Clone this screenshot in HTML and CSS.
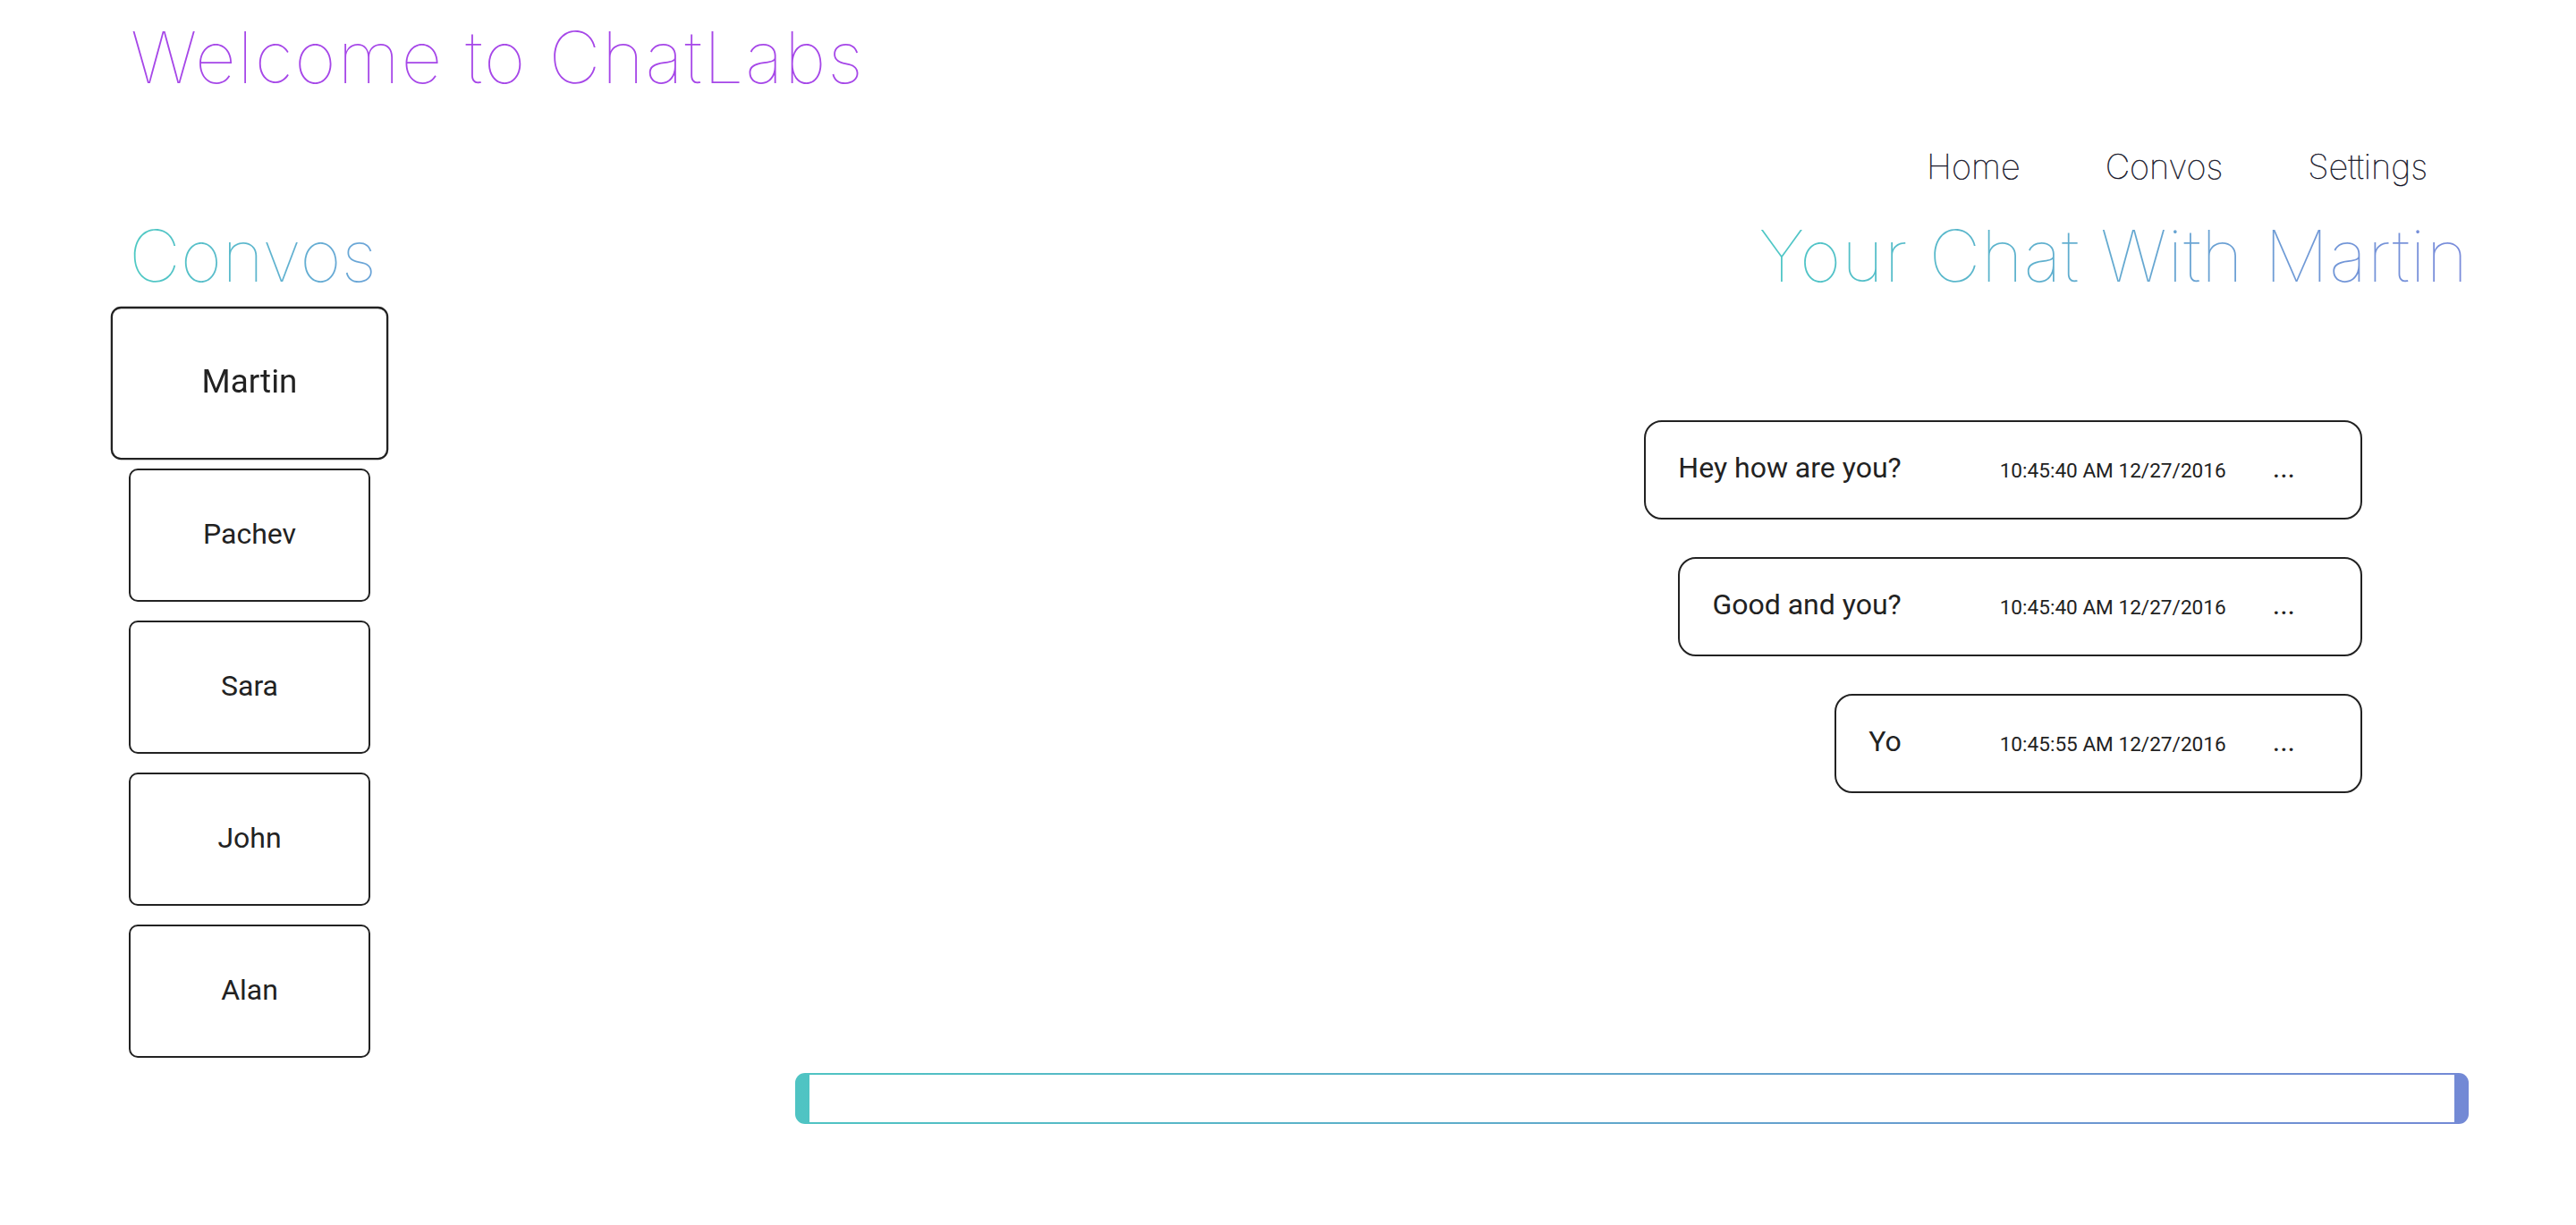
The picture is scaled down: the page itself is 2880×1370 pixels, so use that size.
FILE: index.html
```html
<!DOCTYPE html>
<html lang="en">
<head>
<meta charset="utf-8">
<title>ChatLabs</title>
<link rel="stylesheet" href="styles.css">
</head>
<body>
<header class="top">
  <h1 class="brand">Welcome to ChatLabs</h1>
  <nav class="nav">
    <a class="nav-link" href="#">Home</a>
    <a class="nav-link" href="#">Convos</a>
    <a class="nav-link" href="#">Settings</a>
  </nav>
</header>
<main class="layout">
  <aside class="sidebar">
    <h2 class="section-title"><span class="grad grad-short">Convos</span></h2>
    <ul class="convo-list">
      <li class="convo active">Martin</li>
      <li class="convo">Pachev</li>
      <li class="convo">Sara</li>
      <li class="convo">John</li>
      <li class="convo">Alan</li>
    </ul>
  </aside>
  <section class="chat">
    <h2 class="chat-title"><span class="grad">Your Chat With Martin</span></h2>
    <div class="messages">
      <div class="bubble">
        <span class="msg-text">Hey how are you?</span>
        <span class="msg-time">10:45:40 AM 12/27/2016</span>
        <span class="msg-more">...</span>
      </div>
      <div class="bubble">
        <span class="msg-text">Good and you?</span>
        <span class="msg-time">10:45:40 AM 12/27/2016</span>
        <span class="msg-more">...</span>
      </div>
      <div class="bubble">
        <span class="msg-text">Yo</span>
        <span class="msg-time">10:45:55 AM 12/27/2016</span>
        <span class="msg-more">...</span>
      </div>
    </div>
    <div class="composer">
      <input class="composer-input" type="text" aria-label="Message">
    </div>
  </section>
</main>
</body>
</html>
```
FILE: styles.css
```css
* { box-sizing: border-box; }

body {
  margin: 0;
  background: #ffffff;
  font-family: Roboto, "Liberation Sans", sans-serif;
  color: #222222;
}

.top {
  padding-top: 24px;
}

.brand {
  margin: 0;
  padding-left: 146px;
  font-family: Inter, "Liberation Sans", sans-serif;
  font-weight: 100;
  font-size: 80px;
  line-height: 80px;
  letter-spacing: 1.8px;
  color: #a647e8;
}

.nav {
  margin-top: 63px;
  display: flex;
  justify-content: flex-end;
  gap: 95px;
  padding-right: 166px;
}

.nav-link {
  font-family: Inter, "Liberation Sans", sans-serif;
  font-weight: 100;
  font-size: 38px;
  line-height: 38px;
  color: #101024;
  -webkit-text-stroke: 0.45px #101024;
  text-decoration: none;
}

.layout {
  margin-top: 41px;
  display: flex;
  gap: 475px;
  padding-left: 144px;
  padding-right: 120px;
}

.sidebar {
  width: 270px;
  flex: none;
}

.section-title,
.chat-title {
  margin: 0;
  font-family: Inter, "Liberation Sans", sans-serif;
  font-weight: 100;
  font-size: 80px;
  line-height: 80px;
}

.chat-title {
  text-align: right;
  letter-spacing: 0.7px;
}

.grad {
  background: linear-gradient(to right, #4dc8c5, #7a8bdb);
  -webkit-background-clip: text;
  background-clip: text;
  color: transparent;
}

.grad-short {
  background: linear-gradient(to right, #4ecac3, #6ca3d8);
  -webkit-background-clip: text;
  background-clip: text;
}

.convo-list {
  list-style: none;
  margin: 28px 0 0;
  padding: 0;
}

.convo {
  height: 149px;
  margin-bottom: 21px;
  padding-bottom: 4px;
  border: 2px solid #222222;
  border-radius: 10px;
  display: flex;
  align-items: center;
  justify-content: center;
  font-size: 32px;
  color: #222222;
  background: #ffffff;
}

.convo.active {
  transform: scale(1.15);
}

.chat {
  flex: 1;
  min-width: 0;
}

.messages {
  margin-top: 144px;
  display: flex;
  flex-direction: column;
  align-items: flex-end;
  gap: 42px;
  padding-right: 119px;
}

.bubble {
  height: 111px;
  display: flex;
  align-items: baseline;
  padding: 31px 73px 0 36px;
  border: 2px solid #222222;
  border-radius: 20px;
}

.msg-text {
  font-size: 32px;
  line-height: 40px;
  color: #222222;
}

.msg-time {
  margin-left: 110px;
  font-size: 22.6px;
  color: #222222;
}

.msg-more {
  margin-left: 52px;
  font-size: 32px;
  color: #222222;
}

.composer {
  margin-top: 313px;
  height: 57px;
  padding: 2px 16px;
  border-radius: 11px;
  background: linear-gradient(to right, #4fc4c3, #7389d5);
}

.composer-input {
  display: block;
  width: 100%;
  height: 100%;
  border: 0;
  margin: 0;
  padding: 0 12px;
  background: #ffffff;
  font-family: Roboto, "Liberation Sans", sans-serif;
  font-size: 28px;
  outline: none;
}
```
